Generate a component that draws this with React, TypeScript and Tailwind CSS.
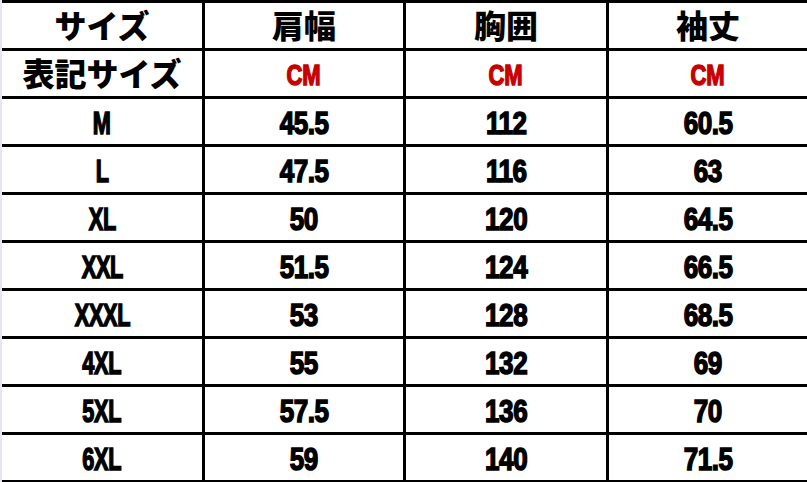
import React from "react";

const rows: [string, string, string, string][] = [
  ["M", "45.5", "112", "60.5"],
  ["L", "47.5", "116", "63"],
  ["XL", "50", "120", "64.5"],
  ["XXL", "51.5", "124", "66.5"],
  ["XXXL", "53", "128", "68.5"],
  ["4XL", "55", "132", "69"],
  ["5XL", "57.5", "136", "70"],
  ["6XL", "59", "140", "71.5"],
];

const widths = ["w-[203px] border-r-[3px]", "w-[201px] border-r-[3px]", "w-[203px] border-r-[3px]", "flex-1"];

const jpCls = "font-['Noto_Sans_CJK_JP',sans-serif] font-black text-[32px] text-black leading-none pb-[3px]";
const numCls =
  "inline-block font-['Liberation_Sans',Arial,sans-serif] font-bold text-[31px] leading-none text-black [-webkit-text-stroke:1.5px_black] tracking-[-0.5px]";

function Cell({ w, children }: { w: string; children: React.ReactNode }) {
  return <div className={`${w} border-black flex items-center justify-center`}>{children}</div>;
}

export default function App() {
  return (
    <div className="w-[807px] h-[482px] bg-white flex overflow-hidden">
      <div className="w-[2px] h-full bg-[#e6e6ee] shrink-0" />
      <div className="flex-1 flex flex-col border-t-[3px] border-black">
        <div className="flex h-[48px] shrink-0 border-b-[3px] border-black">
          {["サイズ", "肩幅", "胸囲", "袖丈"].map((t, i) => (
            <Cell key={i} w={widths[i]}>
              <span className={jpCls}>{t}</span>
            </Cell>
          ))}
        </div>
        <div className="flex h-[48px] shrink-0 border-b-[3px] border-black">
          <Cell w={widths[0]}>
            <span className={jpCls}>表記サイズ</span>
          </Cell>
          {[1, 2, 3].map((i) => (
            <Cell key={i} w={widths[i]}>
              <span className="inline-block font-['Liberation_Sans',Arial,sans-serif] font-bold text-[29px] leading-none text-[#c80000] [-webkit-text-stroke:1.5px_#c80000] scale-x-[0.76] pt-[3px]">
                CM
              </span>
            </Cell>
          ))}
        </div>
        {rows.map((r, ri) => (
          <div key={ri} className="flex h-[48px] shrink-0 border-b-[3px] border-black">
            {r.map((c, i) => (
              <Cell key={i} w={widths[i]}>
                <span className={`${numCls} ${i === 0 ? "scale-x-[0.7]" : "scale-x-[0.84]"} pt-[3px]`}>{c}</span>
              </Cell>
            ))}
          </div>
        ))}
      </div>
    </div>
  );
}
